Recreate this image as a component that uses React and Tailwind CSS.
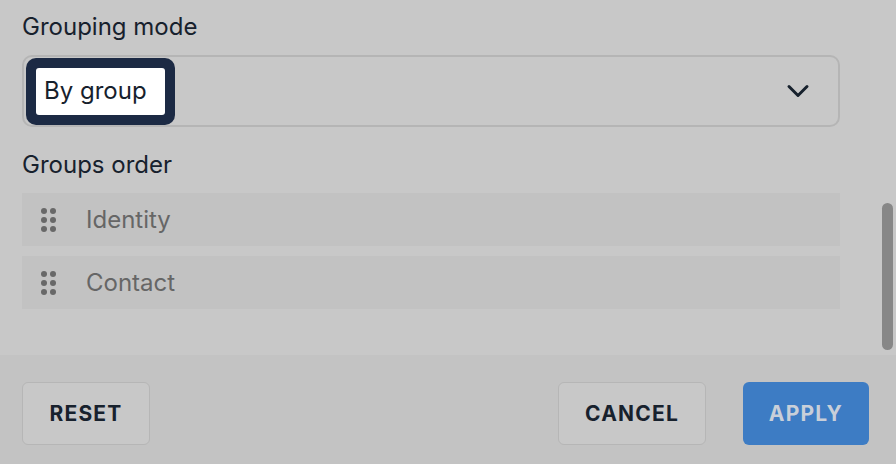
import { ChevronDown } from "lucide-react";

const groups = ["Identity", "Contact"];

const DragHandle = () => (
  <div className="grid grid-cols-2 gap-x-[3px] gap-y-[3px]">
    {Array.from({ length: 6 }).map((_, i) => (
      <span key={i} className="block w-[6px] h-[6px] rounded-full bg-[#686868]" />
    ))}
  </div>
);

export default function App() {
  return (
    <div
      className="w-[896px] h-[464px] bg-[#c8c8c8] flex flex-col overflow-hidden text-[#17212d]"
      style={{ fontFamily: "Inter, 'Noto Sans', sans-serif" }}
    >
      <div className="relative flex-1 pl-[22px] pr-[56px]">
        <p className="text-[24px] leading-[28px] pt-[13px]">Grouping mode</p>

        <div className="mt-[14px] h-[72px] rounded-[10px] border-2 border-[#b5b5b5] flex items-center pl-[2px] pr-[22px]">
          <div className="rounded-[10px] bg-[#1c2a44] p-[10px]">
            <div className="bg-white rounded-[3px] w-[129px] h-[47px] flex items-center pl-[8px] text-[24px]">
              By group
            </div>
          </div>
          <div className="flex-1" />
          <ChevronDown size={36} strokeWidth={2} className="text-[#17212d]" />
        </div>

        <p className="text-[24px] leading-[28px] mt-[24px]">Groups order</p>

        <div className="mt-[14px] flex flex-col gap-[10px]">
          {groups.map((g) => (
            <div key={g} className="h-[53px] bg-[#c2c2c2] flex items-center pl-[19px]">
              <DragHandle />
              <span className="ml-[30px] text-[24px] text-[#666666]">{g}</span>
            </div>
          ))}
        </div>

        <div className="absolute right-[3px] top-[203px] w-[11px] h-[147px] rounded-full bg-[#878787]" />
      </div>

      <div className="h-[109px] bg-[#c3c3c3] flex items-start pt-[27px] pl-[22px] pr-[27px]">
        <button className="h-[63px] w-[128px] rounded-[6px] border border-[#b6b6b6] bg-[#c8c8c8] text-[21px] font-bold tracking-[1.2px]">
          RESET
        </button>
        <div className="flex-1" />
        <button className="h-[63px] w-[148px] rounded-[6px] border border-[#b6b6b6] bg-[#c8c8c8] text-[21px] font-bold tracking-[1.2px]">
          CANCEL
        </button>
        <button className="ml-[37px] h-[63px] w-[126px] rounded-[6px] bg-[#3d7cc4] text-[#c8cfd9] text-[21px] font-bold tracking-[1.2px]">
          APPLY
        </button>
      </div>
    </div>
  );
}
